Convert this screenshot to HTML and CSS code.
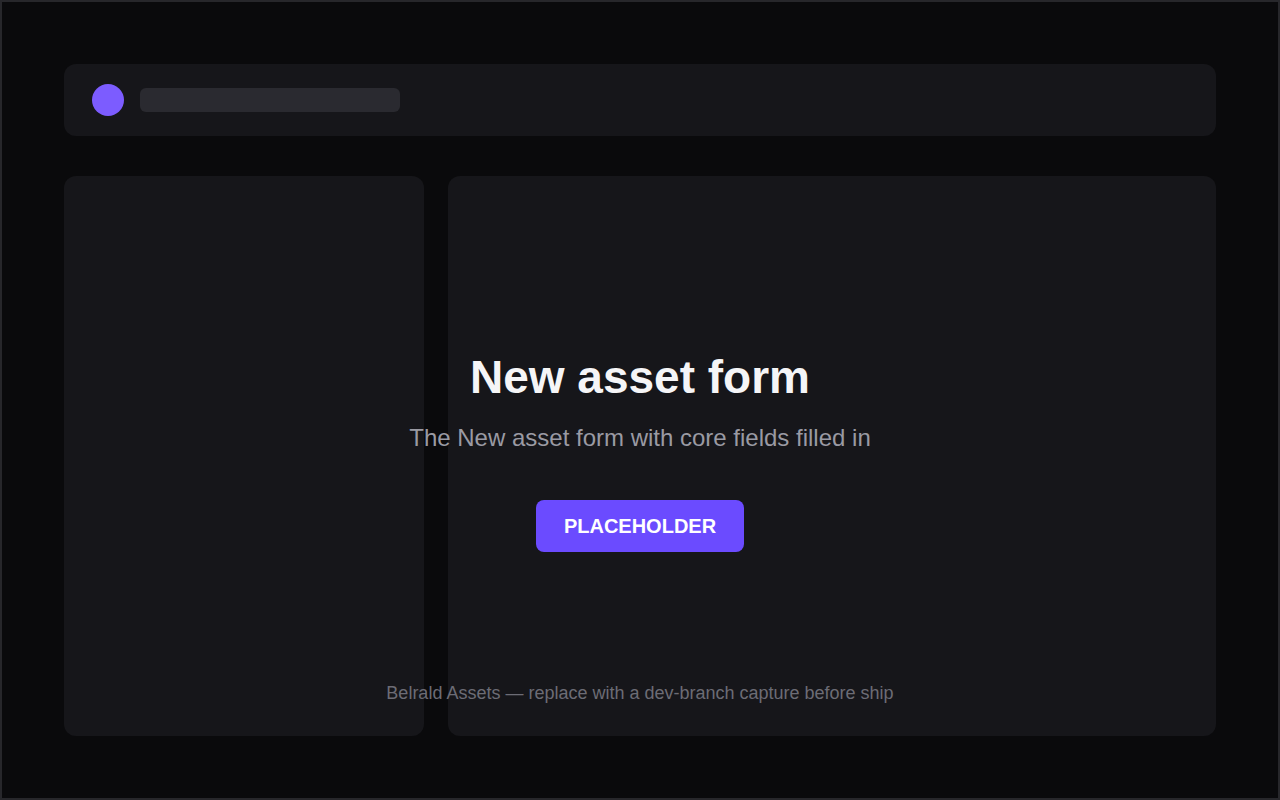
FILE: index.html
```html
<!DOCTYPE html>
<html lang="en">
<head>
  <meta charset="UTF-8" />
  <meta name="viewport" content="width=device-width, initial-scale=1.0"/>
  <title>New asset form</title>
  <link rel="stylesheet" href="styles.css">
</head>
<body>
  <div class="frame">
    <div class="topbar">
      <div class="avatar"></div>
      <div class="title-bar"></div>
    </div>

    <div class="panels">
      <div class="panel side"></div>
      <div class="panel main"></div>
    </div>

    <div class="overlay">
      <h1>New asset form</h1>
      <p class="subtitle">The New asset form with core fields filled in</p>
      <button class="cta">PLACEHOLDER</button>
      <p class="note">Belrald Assets — replace with a dev-branch capture before ship</p>
    </div>
  </div>
</body>
</html>
```

FILE: styles.css
```css
* {
  margin: 0;
  padding: 0;
  box-sizing: border-box;
  font-family: 'Liberation Sans', Arial, sans-serif;
}

body {
  background: #0a0a0c;
}

.frame {
  position: relative;
  width: 1280px;
  height: 800px;
  border: 2px solid #27272b;
  padding: 62px;
  background: #0a0a0c;
}

.topbar {
  height: 72px;
  background: #16161a;
  border-radius: 12px;
  display: flex;
  align-items: center;
  gap: 16px;
  padding: 0 28px;
  margin-bottom: 40px;
}

.avatar {
  width: 32px;
  height: 32px;
  border-radius: 50%;
  background: #7c5cff;
}

.title-bar {
  width: 260px;
  height: 24px;
  border-radius: 6px;
  background: #2a2a30;
}

.panels {
  display: flex;
  gap: 24px;
  height: 560px;
}

.panel {
  background: #16161a;
  border-radius: 12px;
}

.side {
  width: 360px;
}

.main {
  flex: 1;
}

.overlay {
  position: absolute;
  inset: 0;
  display: flex;
  flex-direction: column;
  align-items: center;
  padding-top: 345px;
}

.overlay h1 {
  color: #f5f5f7;
  font-size: 46px;
  line-height: 60px;
  font-weight: 700;
}

.subtitle {
  color: #9a9aa3;
  font-size: 24px;
  line-height: 30px;
  margin-top: 16px;
}

.cta {
  margin-top: 47px;
  width: 208px;
  height: 52px;
  border: none;
  border-radius: 8px;
  background: #6b4bff;
  color: #ffffff;
  font-size: 20px;
  font-weight: 700;
}

.note {
  margin-top: 130px;
  color: #6c6c75;
  font-size: 18px;
  line-height: 22px;
}
```
